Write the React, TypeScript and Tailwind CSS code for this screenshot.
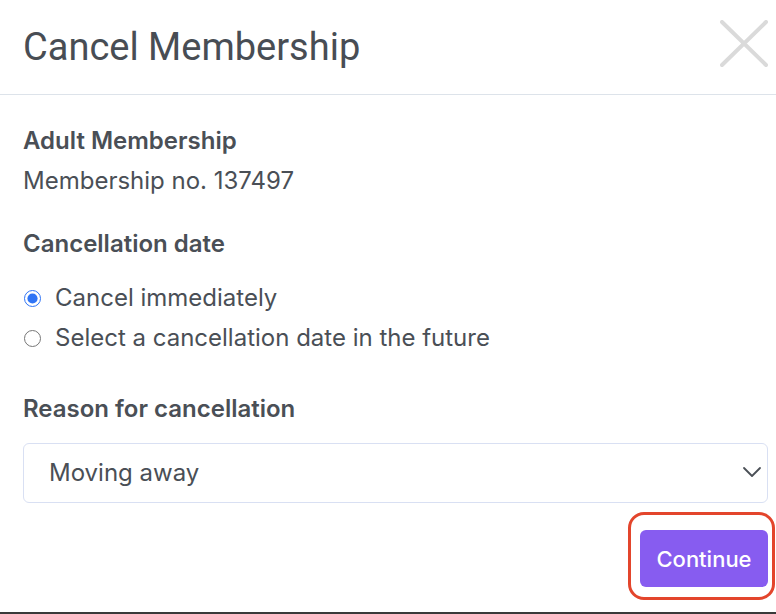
import { useState } from "react";

const reasons = ["Moving away", "Too expensive", "Not using it enough", "Other"];

export default function App() {
  const [when, setWhen] = useState("now");
  const [reason, setReason] = useState("Moving away");

  return (
    <div className="flex h-[614px] w-[776px] flex-col bg-white font-['Inter',sans-serif] text-[24px] leading-10 text-[#4a4f56]">
      {/* Entête */}
      <div className="flex h-[95px] shrink-0 items-center justify-between border-b border-[#dde3ea] pl-[23px] pr-[8px]">
        <h1 className="font-['Roboto',sans-serif] text-[38px] font-normal text-[#484d54]">
          Cancel Membership
        </h1>
        <button className="mt-[-6px] text-[#dadada]" aria-label="Close">
          <svg width="48" height="48" viewBox="0 0 48 48" fill="none">
            <path d="M2 2 L46 45 M46 2 L2 45" stroke="currentColor" strokeWidth="4" strokeLinecap="round" />
          </svg>
        </button>
      </div>

      {/* Contenu */}
      <div className="flex flex-1 flex-col pl-[23px] pr-[8px] pt-[26px]">
        <p className="font-semibold">Adult Membership</p>
        <p>Membership no. 137497</p>

        <p className="mt-[23px] font-semibold">Cancellation date</p>
        <div className="mt-[14px] flex flex-col">
          <label className="flex items-center gap-[14px]">
            <input
              type="radio"
              name="when"
              checked={when === "now"}
              onChange={() => setWhen("now")}
              className="ml-[1px] h-[17px] w-[17px] accent-[#2f74f5]"
            />
            Cancel immediately
          </label>
          <label className="flex items-center gap-[14px]">
            <input
              type="radio"
              name="when"
              checked={when === "future"}
              onChange={() => setWhen("future")}
              className="ml-[1px] h-[17px] w-[17px] accent-[#2f74f5]"
            />
            Select a cancellation date in the future
          </label>
        </div>

        <p className="mt-[31px] font-semibold">Reason for cancellation</p>
        <div className="relative mt-[14px]">
          <select
            value={reason}
            onChange={(e) => setReason(e.target.value)}
            className="h-[60px] w-full appearance-none rounded-md border border-[#d9e0f3] bg-white pl-[25px] text-[24px] text-[#4a4f56]"
          >
            {reasons.map((r) => (
              <option key={r} value={r}>
                {r}
              </option>
            ))}
          </select>
          <svg
            className="pointer-events-none absolute right-[6px] top-[23px]"
            width="20"
            height="12"
            viewBox="0 0 20 12"
            fill="none"
          >
            <path d="M2 2 L10 10 L18 2" stroke="#4a4f56" strokeWidth="1.8" strokeLinecap="round" strokeLinejoin="round" />
          </svg>
        </div>

        {/* Bouton */}
        <div className="mr-[-7px] mt-[9px] flex justify-end">
          <div className="rounded-2xl border-[3px] border-[#e3452c] pb-[10px] pl-[9px] pr-[4px] pt-[15px]">
            <button className="h-[57px] w-[128px] rounded-md bg-[#875cf0] text-[22px] font-medium text-white">
              Continue
            </button>
          </div>
        </div>
      </div>

      <div className="h-[2px] shrink-0 bg-[#3a3a3a]" />
    </div>
  );
}
